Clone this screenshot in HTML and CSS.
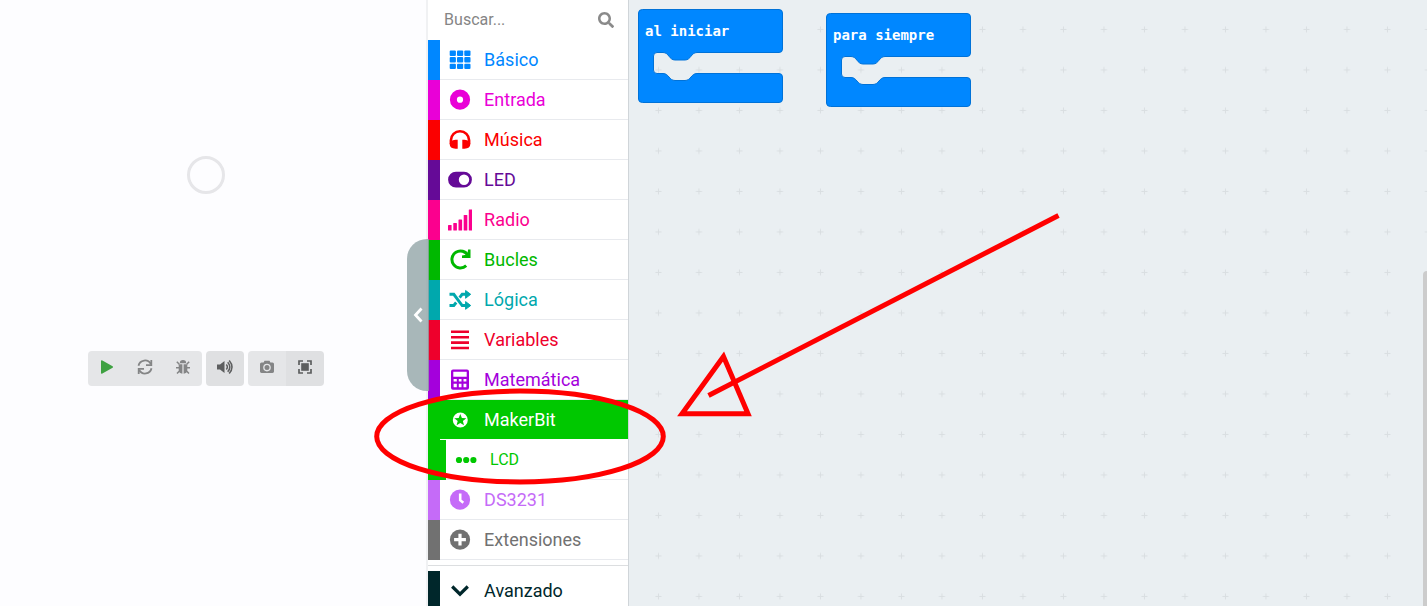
FILE: index.html
```html
<!DOCTYPE html>
<html lang="es">
<head>
<meta charset="utf-8">
<title>Editor de bloques</title>
<link rel="stylesheet" href="styles.css">
</head>
<body>
<main class="editor">
  <section class="simulator" aria-label="Simulador">
    <div class="loader"></div>
    <div class="toolbar">
      <div class="group">
        <button class="tool play" aria-label="Iniciar"><svg class="tool-icon" viewBox="0 0 20 20"><path d="M4 4.200Q4 2.600 5.400 3.400L15.600 9.200Q16.700 10 15.600 10.800L5.400 16.600Q4 17.400 4 15.800Z"/></svg></button>
        <button class="tool" aria-label="Reiniciar"><svg class="tool-icon" viewBox="0 0 20 20"><g fill="none" stroke="currentColor" stroke-width="1.800"><path d="M3.500 8.700A6.600 6.600 0 0 1 15.800 7"/><path d="M16.500 11.300A6.600 6.600 0 0 1 4.200 13"/><path d="M16.300 3V8.200H11"/><path d="M3.700 17V11.800H9"/></g></svg></button>
        <button class="tool" aria-label="Depurar"><svg class="tool-icon" viewBox="0 0 20 20"><path d="M6.800 6.200a3.200 3.200 0 0 1 6.400 0z"/><path d="M5.700 7.200H9.400V16.700A4 4 0 0 1 5.700 13Z"/><path d="M14.300 7.200H10.600V16.700A4 4 0 0 0 14.300 13Z"/><path d="M3.800 4.800L6.300 7.300M16.200 4.800L13.700 7.300M3 10.700H6M17 10.700H14M4 16.600L6.700 13.800M16 16.600L13.300 13.800" fill="none" stroke="currentColor" stroke-width="1.500"/></svg></button>
      </div>
      <div class="group">
        <button class="tool strong" aria-label="Sonido"><svg class="tool-icon" viewBox="0 0 20 20"><path d="M2 7.500H5L9.500 4V16L5 12.500H2Z"/><path d="M11.300 7.500Q13.500 10 11.300 12.500M12.700 5.200Q17 10 12.700 14.800M14.200 3.400Q19.800 10 14.200 16.600" fill="none" stroke="currentColor" stroke-width="1.500"/></svg></button>
      </div>
      <div class="group">
        <button class="tool" aria-label="Captura"><svg class="tool-icon" viewBox="0 0 20 20"><path fill-rule="evenodd" d="M4.500 5.400H6.600L7.500 3.800H12.500L13.400 5.400H15.500Q17 5.400 17 6.900V14.600Q17 16 15.500 16H4.500Q3 16 3 14.600V6.900Q3 5.400 4.500 5.400ZM10 6.800a3.800 3.800 0 1 0 0 7.600a3.800 3.800 0 1 0 0-7.600ZM10 8.100a2.500 2.500 0 1 1 0 5a2.500 2.500 0 1 1 0-5Z"/></svg></button>
        <button class="tool strong" aria-label="Pantalla completa"><svg class="tool-icon" viewBox="0 0 20 20"><rect x="6.200" y="6.200" width="7.600" height="7.600"/><path d="M4 8V4H8M12 4H16V8M16 12V16H12M8 16H4V12" fill="none" stroke="currentColor" stroke-width="1.700"/></svg></button>
      </div>
    </div>
    <button class="collapse" aria-label="Ocultar simulador"><svg class="collapse-icon" viewBox="0 0 12 18"><path d="M9.500 2.500L3.500 9L9.500 15.500" fill="none" stroke="currentColor" stroke-width="2.800"/></svg></button>
  </section>

  <nav class="toolbox" aria-label="Categorías">
    <label class="search">
      <input class="search-input" type="text" placeholder="Buscar..." aria-label="Buscar">
      <svg class="search-icon" viewBox="0 0 512 512"><path d="M505 442.700L405.300 343c-4.500-4.500-10.600-7-17-7H372c27.600-35.300 44-79.700 44-128C416 93.100 322.900 0 208 0S0 93.100 0 208s93.100 208 208 208c48.300 0 92.700-16.400 128-44v16.300c0 6.400 2.500 12.500 7 17l99.700 99.700c9.400 9.400 24.600 9.400 33.900 0l28.300-28.300c9.400-9.400 9.400-24.600.1-34zM208 336c-70.700 0-128-57.200-128-128 0-70.700 57.200-128 128-128 70.700 0 128 57.200 128 128 0 70.700-57.200 128-128 128z"/></svg>
    </label>
    <ul class="categories">
      <li class="category basic"><button class="row"><svg class="icon" viewBox="0 0 24 24"><g><rect x="1.700" y="2.500" width="6.200" height="5.400" rx="1"/><rect x="9" y="2.500" width="6.200" height="5.400" rx="1"/><rect x="16.300" y="2.500" width="6.200" height="5.400" rx="1"/><rect x="1.700" y="9.100" width="6.200" height="5.400" rx="1"/><rect x="9" y="9.100" width="6.200" height="5.400" rx="1"/><rect x="16.300" y="9.100" width="6.200" height="5.400" rx="1"/><rect x="1.700" y="15.700" width="6.200" height="5.400" rx="1"/><rect x="9" y="15.700" width="6.200" height="5.400" rx="1"/><rect x="16.300" y="15.700" width="6.200" height="5.400" rx="1"/></g></svg>Básico</button></li>
      <li class="category input"><button class="row"><svg class="icon" viewBox="0 0 24 24"><circle cx="12" cy="11.700" r="6.600" fill="none" stroke="currentColor" stroke-width="7"/></svg>Entrada</button></li>
      <li class="category music"><button class="row"><svg class="icon" viewBox="0 0 24 24"><path d="M2.900 16V12.300A9.100 9.100 0 0 1 21.100 12.300V16" fill="none" stroke="currentColor" stroke-width="2.600"/><path d="M9.700 11.800V20.800H7.500Q1.700 20.500 1.700 16.300T7.500 11.800ZM14.300 11.800V20.800H16.500Q22.300 20.500 22.300 16.300T16.500 11.800Z"/></svg>Música</button></li>
      <li class="category led"><button class="row"><svg class="icon" viewBox="0 0 24 24"><path fill-rule="evenodd" d="M8 3.800H16A7.900 7.900 0 0 1 16 19.600H8A7.900 7.900 0 0 1 8 3.800ZM16 6.500a5.200 5.200 0 1 0 0 10.400a5.200 5.200 0 1 0 0-10.400Z"/></svg>LED</button></li>
      <li class="category radio"><button class="row"><svg class="icon" viewBox="0 0 24 24"><rect x="0" y="17" width="3.600" height="5.500" rx=".6"/><rect x="5.300" y="15" width="3.600" height="7.500" rx=".6"/><rect x="10.500" y="11.500" width="3.600" height="11" rx=".6"/><rect x="15.700" y="7" width="3.600" height="15.500" rx=".6"/><rect x="20.800" y="1.500" width="3.600" height="21" rx=".6"/></svg>Radio</button></li>
      <li class="category loops"><button class="row"><svg class="icon" viewBox="0 0 24 24"><path d="M20 7.600A8.500 8.500 0 1 0 18.200 17.700" fill="none" stroke="currentColor" stroke-width="3"/><path d="M22.500 1.500V9.900H14V7.500L19.300 6.500L20.100 1.500Z"/></svg>Bucles</button></li>
      <li class="category logic"><button class="row"><svg class="icon" viewBox="0 0 24 24"><path d="M1.500 6.300H5.800L14.200 17.500H18.500M1.500 17.500H5.800L8.200 14.500M11.600 9.700L14.200 6.300H18.500" fill="none" stroke="currentColor" stroke-width="2.900"/><path d="M17.600 2.500L22.700 6.300L17.600 10.300ZM17.600 13.600L22.700 17.500L17.600 21.300Z" stroke="currentColor" stroke-width="1" stroke-linejoin="round"/></svg>Lógica</button></li>
      <li class="category variables"><button class="row"><svg class="icon" viewBox="0 0 24 24"><path d="M3 3.800H21M3 9.200H21M3 14.600H21M3 20H21" fill="none" stroke="currentColor" stroke-width="2.600"/></svg>Variables</button></li>
      <li class="category math"><button class="row"><svg class="icon" viewBox="0 0 24 24"><path fill-rule="evenodd" d="M5 1.500H19Q21 1.500 21 3.500V19.700Q21 21.700 19 21.700H5Q3 21.700 3 19.700V3.500Q3 1.500 5 1.500ZM5.300 3.700V8.800H18.700V3.700ZM5.600 11V13.600H8.800V11ZM10.800 11V13.600H13.500V11ZM15.500 11V13.600H18.400V11ZM5.600 15.800V19.200H8.800V15.800ZM10.800 15.800V19.200H13.500V15.800ZM15.500 15.800V19.200H18.400V15.800Z"/></svg>Matemática</button></li>
      <li class="category makerbit"><button class="row selected"><svg class="icon" viewBox="0 0 24 24"><path fill-rule="evenodd" d="M12.300 4.500a7.500 7.500 0 1 0 0 15a7.500 7.500 0 1 0 0-15ZM12.300 5.900L13.900 9.900L18.300 10.200L14.900 13L16 17.200L12.300 14.900L8.600 17.200L9.700 13L6.300 10.200L10.700 9.900Z"/></svg>MakerBit</button></li>
      <li class="category lcd"><button class="row small"><svg class="icon" viewBox="0 0 24 24"><circle cx="5" cy="12" r="3.100"/><circle cx="12.200" cy="12" r="3.100"/><circle cx="19.400" cy="12" r="3.100"/></svg>LCD</button></li>
      <li class="category clock"><button class="row"><svg class="icon" viewBox="0 0 24 24"><circle cx="12" cy="11.700" r="10.100"/><path d="M12.200 5.500V12.200L15.300 14.700" fill="none" stroke="#fff" stroke-width="2.600"/></svg>DS3231</button></li>
      <li class="category extensions"><button class="row"><svg class="icon" viewBox="0 0 24 24"><circle cx="12" cy="11.700" r="10.100"/><path d="M12 5.800V17.600M6.100 11.700H17.900" fill="none" stroke="#fff" stroke-width="3.200"/></svg>Extensiones</button></li>
    </ul>
    <ul class="categories more">
      <li class="category advanced"><button class="row"><svg class="icon" viewBox="0 0 24 24"><path d="M4.200 7.500L12 15.200L19.800 7.500" fill="none" stroke="currentColor" stroke-width="3.200"/></svg>Avanzado</button></li>
    </ul>
  </nav>

  <section class="workspace" aria-label="Área de trabajo">
    <svg class="grid">
      <defs>
        <pattern id="crosses" x="9.200" y="9.200" width="40.500" height="40.500" patternUnits="userSpaceOnUse">
          <path d="M17.250 20.250H23.250M20.250 17.250V23.250" stroke="#d9dee1" stroke-width="1"/>
        </pattern>
      </defs>
      <rect width="100%" height="100%" fill="url(#crosses)"/>
    </svg>
    <svg class="block start" viewBox="0 0 146 96">
      <path class="block-shape" d="M4.500 .5H141Q144.500 .5 144.500 4V40Q144.500 43.500 141 43.500H59C53 43.500 53 51 47 51H37C31 51 31 43.500 25 43.500H19Q15.500 43.500 15.500 47V61Q15.500 64.500 19 64.500H25C31 64.500 31 71.500 37 71.500H47C53 71.500 53 64.500 59 64.500H141Q144.500 64.500 144.500 68V90Q144.500 93.500 141 93.500H4.500Q.5 93.500 .5 90V4Q.5 .5 4.500 .5Z"/>
      <text class="block-label" x="7" y="27">al iniciar</text>
    </svg>
    <svg class="block forever" viewBox="0 0 146 96">
      <path class="block-shape" d="M4.500 .5H141Q144.500 .5 144.500 4V40Q144.500 43.500 141 43.500H59C53 43.500 53 51 47 51H37C31 51 31 43.500 25 43.500H19Q15.500 43.500 15.500 47V61Q15.500 64.500 19 64.500H25C31 64.500 31 71.500 37 71.500H47C53 71.500 53 64.500 59 64.500H141Q144.500 64.500 144.500 68V90Q144.500 93.500 141 93.500H4.500Q.5 93.500 .5 90V4Q.5 .5 4.500 .5Z"/>
      <text class="block-label" x="7" y="27">para siempre</text>
    </svg>
    <div class="scroll-thumb"></div>
  </section>
</main>
<svg class="annotation" viewBox="0 0 1427 606" preserveAspectRatio="xMinYMin meet" aria-hidden="true">
  <ellipse cx="520" cy="436.500" rx="143.300" ry="45.400"/>
  <path d="M1058.500 215.500L708.500 395.500"/>
  <path d="M723.500 356.500L682 413.800H748Z"/>
</svg>
</body>
</html>
```
FILE: styles.css
```css
* {
  box-sizing: border-box;
}

body {
  margin: 0;
  overflow: hidden;
  font-family: Roboto, "Liberation Sans", sans-serif;
}

button {
  margin: 0;
  padding: 0;
  border: 0;
  background: none;
  color: inherit;
  font: inherit;
}

svg {
  fill: currentColor;
}

.editor {
  display: flex;
  height: 100vh;
}

/* Simulator */
.simulator {
  position: relative;
  flex: 0 0 30%;
  display: flex;
  flex-direction: column;
  align-items: center;
  gap: 157px;
  padding: 156px 14px 0 0;
  border-right: 2px solid #f0f1f3;
  background: #fdfdff;
}

.loader {
  width: 38px;
  height: 38px;
  border: 3px solid #e6e6e9;
  border-radius: 50%;
}

.toolbar {
  display: flex;
  gap: 4px;
}

.group {
  display: flex;
  overflow: hidden;
  border-radius: 4px;
}

.tool {
  display: flex;
  align-items: center;
  justify-content: center;
  width: 38px;
  height: 35px;
  padding-bottom: 3px;
  background: #e5e6e8;
  color: #848586;
}

.tool.play {
  color: #3fa142;
}

.tool.strong {
  background: #dfe0e2;
  color: #5d5e5f;
}

.tool-icon {
  width: 20px;
  height: 20px;
}

.collapse {
  position: absolute;
  top: 239px;
  right: -3px;
  z-index: 1;
  display: flex;
  align-items: center;
  justify-content: center;
  width: 22px;
  height: 152px;
  border-radius: 20px 0 0 20px;
  background: rgba(146, 165, 167, 0.8);
  color: #fff;
}

.collapse-icon {
  width: 12px;
  height: 18px;
}

/* Toolbox */
.toolbox {
  flex: 0 0 201px;
  overflow: hidden;
  border-right: 1px solid #d0d5d9;
  background: #fff;
}

.search {
  display: flex;
  align-items: center;
  height: 40px;
  padding: 0 14px 0 16px;
  color: #8a8a8a;
}

.search-input {
  flex: 1;
  min-width: 0;
  padding: 0;
  border: 0;
  outline: 0;
  background: none;
  font: 16px/20px Roboto, "Liberation Sans", sans-serif;
}

.search-input::placeholder {
  color: #858585;
}

.search-icon {
  width: 16px;
  height: 16px;
}

.categories {
  margin: 0;
  padding: 0;
  list-style: none;
}

.more {
  margin-top: 5px;
  padding-top: 5px;
  border-top: 1px solid #dcdee0;
}

.category {
  border-left: 12px solid currentColor;
}

.row {
  display: flex;
  align-items: center;
  gap: 12px;
  width: 100%;
  height: 40px;
  padding: 0 8px;
  border-bottom: 1px solid #e8eaee;
  font-size: 18px;
  line-height: 20px;
  text-align: left;
}

.row.selected {
  border-bottom-color: #fff;
  background: #00c800;
  background-clip: padding-box;
  color: #fff;
}

.row.small {
  font-size: 16px;
}

.icon {
  flex: none;
  width: 24px;
  height: 24px;
}

.basic { color: #0087ff; }
.input { color: #e900d7; }
.music { color: #fb0000; }
.led { color: #650a97; }
.radio { color: #fb008e; }
.loops { color: #00b800; }
.logic { color: #00a8ad; }
.variables { color: #ee002c; }
.math { color: #a400dc; }
.makerbit { color: #00c800; }
.lcd { border-left-width: 18px; color: #00c800; }
.clock { color: #c56bf8; }
.extensions { color: #717171; }
.advanced { color: #00272b; }

/* Workspace */
.workspace {
  position: relative;
  flex: 1;
  overflow: hidden;
  background: #eaeff2;
}

.grid {
  display: block;
  width: 100%;
  height: 100%;
}

.block {
  position: absolute;
  width: 146px;
  height: 96px;
}

.start {
  left: 9px;
  top: 9px;
}

.forever {
  left: 197px;
  top: 13px;
}

.block-shape {
  fill: #0087ff;
  stroke: #0072d8;
}

.block-label {
  fill: #fff;
  font: bold 14px "DejaVu Sans Mono", monospace;
}

.scroll-thumb {
  position: absolute;
  top: 271px;
  right: -4px;
  bottom: -4px;
  width: 8px;
  border-radius: 4px;
  background: #ccc;
}

/* Callout drawn over the editor */
.annotation {
  position: absolute;
  top: 0;
  left: 0;
  z-index: 2;
  width: 100%;
  fill: none;
  stroke: #f00;
  stroke-width: 5;
  pointer-events: none;
}
```
